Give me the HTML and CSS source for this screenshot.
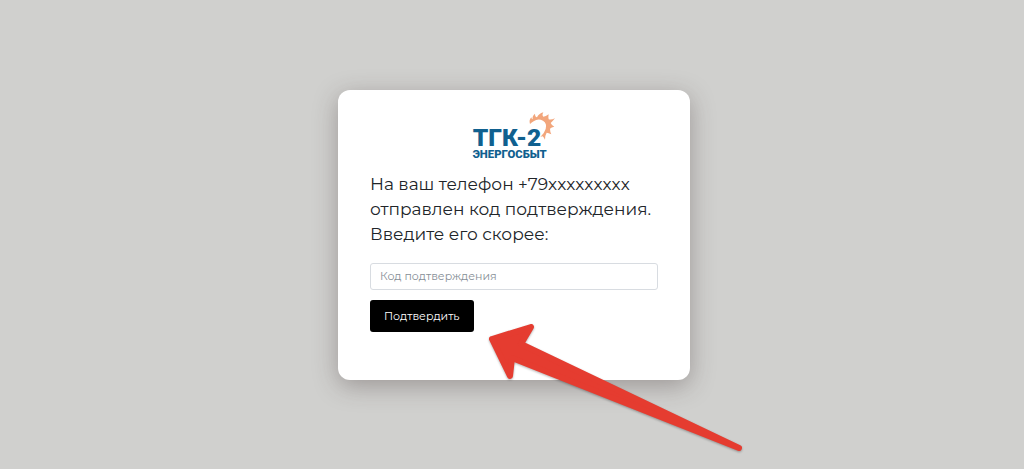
FILE: index.html
```html
<!DOCTYPE html>
<html lang="ru">

<head>
    <meta charset="UTF-8">
    <meta name="viewport" content="width=device-width, initial-scale=1.0">
    <title>Подтверждение телефона</title>
    <link rel="stylesheet" href="styles.css">
</head>

<body>
    <main class="card">
        <svg class="logo" viewBox="24 24 252 144" role="img" aria-label="ТГК-2 Энергосбыт">
            <path class="logo-sun" d="M198 60 Q194 48 202 40 Q203 46 206 46 Q204 36 213 29 Q213 39 219 40 Q224 29 238 25 Q233 34 238 38 Q245 38 254 31 Q252 41 254 46 Q262 48 273 43 Q265 53 260 57 Q263 64 271 68 Q262 70 258 74 Q258 82 262 91 Q253 86 248 86 Q243 94 243 107 Q239 99 236 97 Q233 98 229 99 Q241 88 245 75 Q250 58 237 50 Q222 42 209 52 Q203 55 198 60 Z" />
            <text>
                <tspan class="logo-name" x="26" y="126">ТГК-2</tspan>
                <tspan class="logo-sub" x="26" y="162">ЭНЕРГОСБЫТ</tspan>
            </text>
        </svg>
        <form id="codeForm">
            <label class="message" for="code">На ваш телефон +79xxxxxxxxx отправлен код подтверждения. Введите его скорее:</label>
            <input class="code" type="text" id="code" placeholder="Код подтверждения">
            <button class="submit" type="submit">Подтвердить</button>
        </form>
        <svg class="arrow" viewBox="0 0 260 136" aria-hidden="true">
            <path d="M6 19 L45 7 L35 24 L253 128 L26 38 L24 56 Z" />
        </svg>
    </main>
</body>

</html>
```
FILE: styles.css
```css
* {
    box-sizing: border-box;
}

body {
    display: flex;
    justify-content: center;
    align-items: center;
    min-height: 100vh;
    margin: 0;
    padding-left: 4px;
    background: #d0d0ce;
    font-family: Montserrat, Inter, 'Liberation Sans', sans-serif;
}

.card {
    position: relative;
    width: 100%;
    max-width: 352px;
    padding: 22px 32px 48px;
    border-radius: 12px;
    background: white;
    box-shadow: 0 6px 24px rgba(60, 45, 45, 0.35);
}

.logo {
    display: block;
    width: 84px;
    height: 48px;
    margin: 0 auto 12px;
}

.logo-sun {
    fill: #f2a67c;
}

.logo text {
    fill: #10608f;
    font-family: Roboto, sans-serif;
    font-weight: 900;
}

.logo-name {
    font-size: 74px;
}

.logo-sub {
    font-size: 34px;
}

.message {
    display: block;
    margin-bottom: 16px;
    color: #212529;
    font-size: 17px;
    line-height: 25px;
}

.code {
    display: block;
    width: 100%;
    height: 27px;
    margin-bottom: 10px;
    padding: 0 9px;
    border: 1px solid #d8dce1;
    border-radius: 3px;
    font-family: inherit;
    font-size: 11px;
}

.code::placeholder {
    color: #868e96;
}

.submit {
    display: block;
    height: 32px;
    padding: 0 14px;
    border: none;
    border-radius: 3px;
    background: black;
    color: white;
    font-family: inherit;
    font-size: 11px;
    cursor: pointer;
}

/* стрелка лежит поверх карточки */
.arrow {
    position: absolute;
    top: 230px;
    left: 148px;
    width: 260px;
    height: 136px;
    filter: drop-shadow(0 1px 1px rgba(0, 0, 0, 0.3));
    pointer-events: none;
}

.arrow path {
    fill: #e53c30;
    stroke: #e53c30;
    stroke-width: 6;
    stroke-linejoin: round;
}
```
